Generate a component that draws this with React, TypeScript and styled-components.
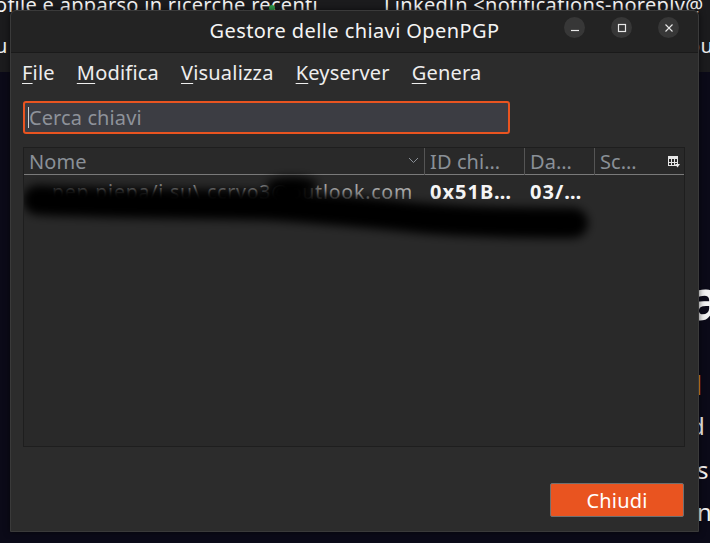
import React from "react";
import styled, { createGlobalStyle } from "styled-components";

const Global = createGlobalStyle`
  html, body { margin: 0; padding: 0; background: #0b0a18; }
  body { font-family: "Noto Sans", "DejaVu Sans", sans-serif; }
  * { box-sizing: border-box; }
`;

const FONT = `"Noto Sans", "DejaVu Sans", sans-serif`;

const Desktop = styled.div`
  position: relative;
  width: 710px;
  height: 543px;
  overflow: hidden;
  background: #0b0a18;
  font-family: ${FONT};
`;

const TopBand = styled.div`
  position: absolute;
  left: 0;
  top: 0;
  width: 710px;
  height: 72px;
  background: #1b1b1d;
`;

const BgText = styled.div<{ $x: number; $y: number; $size?: number; $weight?: number; $color?: string }>`
  position: absolute;
  left: ${(p) => p.$x}px;
  top: ${(p) => p.$y}px;
  font-size: ${(p) => p.$size ?? 20}px;
  font-weight: ${(p) => p.$weight ?? 400};
  color: ${(p) => p.$color ?? "#f2f2f2"};
  white-space: nowrap;
  line-height: 1;
  letter-spacing: 0.3px;
`;

const GreenDot = styled.span`
  position: absolute;
  left: 269px;
  top: 5px;
  width: 6px;
  height: 6px;
  border-radius: 50%;
  background: #2e9b4a;
`;

const Window = styled.div`
  position: absolute;
  left: 10px;
  top: 10px;
  width: 689px;
  height: 522px;
  background: #2c2c2c;
  border: 1px solid #3a3a3a;
  border-radius: 6px 6px 0 0;
  display: flex;
  flex-direction: column;
  color: #f0f0f0;
  box-shadow: 0 0 6px rgba(0, 0, 0, 0.6);
`;

const TitleBar = styled.div`
  height: 42px;
  flex: none;
  background: #232323;
  border-bottom: 1px solid #1a1a1a;
  border-radius: 6px 6px 0 0;
  display: flex;
  align-items: center;
  justify-content: center;
  position: relative;
`;

const Title = styled.div`
  font-size: 20px;
  color: #f4f4f4;
  margin-top: -2px;
  letter-spacing: 0.4px;
`;

const Controls = styled.div`
  position: absolute;
  right: 19px;
  top: 6px;
  display: flex;
  gap: 26px;
`;

const CtrlBtn = styled.div`
  width: 21px;
  height: 21px;
  border-radius: 50%;
  background: #373737;
  display: flex;
  align-items: center;
  justify-content: center;
`;

const MenuBar = styled.div`
  height: 38px;
  flex: none;
  display: flex;
  align-items: center;
  padding-left: 11px;
  gap: 22px;
  padding-top: 1px;
`;

const MenuItem = styled.span`
  font-size: 20px;
  color: #eeeeee;
  letter-spacing: 0.2px;
`;

const Mnemonic = styled.span`
  text-decoration: underline;
  text-underline-offset: 3px;
  text-decoration-thickness: 1px;
`;

const Body = styled.div`
  flex: 1;
  display: flex;
  flex-direction: column;
  padding: 10px 14px 14px 12px;
`;

const SearchBox = styled.div`
  width: 487px;
  height: 33px;
  border: 2px solid #e95420;
  border-radius: 3px;
  background: #3c3d43;
  display: flex;
  align-items: center;
  padding-left: 3px;
`;

const Caret = styled.span`
  width: 1px;
  height: 21px;
  background: #d0d0d0;
`;

const Placeholder = styled.span`
  font-size: 20px;
  color: #8e929a;
  letter-spacing: 0.1px;
`;

const Table = styled.div`
  margin-top: 13px;
  width: 662px;
  height: 300px;
  border: 1px solid #1e1e1e;
  background: #292929;
  position: relative;
  overflow: hidden;
`;

const HeaderRow = styled.div`
  height: 27px;
  display: grid;
  grid-template-columns: 400px 100px 70px 1fr;
  border-bottom: 1px solid #7a7a7a;
`;

const HeaderCell = styled.div<{ $divider?: boolean }>`
  display: flex;
  align-items: center;
  padding-left: 5px;
  font-size: 20px;
  color: #8a9097;
  border-left: ${(p) => (p.$divider ? "1px solid #555" : "none")};
  position: relative;
  white-space: nowrap;
  letter-spacing: 0.1px;
`;

const HeaderIcon = styled.span<{ $right?: number; $top?: number }>`
  position: absolute;
  right: ${(p) => p.$right ?? 5}px;
  top: ${(p) => p.$top ?? 9}px;
  display: flex;
`;

const Row = styled.div`
  height: 32px;
  display: grid;
  grid-template-columns: 400px 100px 70px 1fr;
  align-items: center;
`;

const Cell = styled.div<{ $bold?: boolean; $pad?: number }>`
  padding-left: ${(p) => p.$pad ?? 6}px;
  padding-right: ${(p) => (p.$bold ? 0 : 22)}px;
  font-size: ${(p) => (p.$bold ? 20 : 19.5)}px;
  font-weight: ${(p) => (p.$bold ? 700 : 400)};
  color: ${(p) => (p.$bold ? "#f6f6f6" : "#a8a8a8")};
  white-space: nowrap;
  overflow: hidden;
  letter-spacing: ${(p) => (p.$bold ? "1px" : "0.8px")};
`;

const Scribble = styled.svg`
  position: absolute;
  left: 0;
  top: 0;
  pointer-events: none;
`;

const Footer = styled.div`
  flex: 1;
  display: flex;
  justify-content: flex-end;
  align-items: flex-end;
`;

const CloseButton = styled.button`
  width: 134px;
  height: 34px;
  background: #e95420;
  border: 1px solid #707070;
  border-radius: 2px;
  color: #ffffff;
  font-family: ${FONT};
  font-size: 20px;
  padding: 0;
  letter-spacing: 0.2px;
`;

const Underline = ({ m, rest }: { m: string; rest: string }) => (
  <MenuItem>
    <Mnemonic>{m}</Mnemonic>
    {rest}
  </MenuItem>
);

export default function App() {
  return (
    <>
      <Global />
      <Desktop>
        <TopBand />
        <BgText $x={-5} $y={-5}>ofile è apparso in ricerche recenti</BgText>
        <GreenDot />
        <BgText $x={384} $y={-5}>LinkedIn &lt;notifications-noreply@</BgText>
        <BgText $x={-5} $y={36}>u</BgText>
        <BgText $x={688} $y={36}>ou</BgText>
        <BgText $x={688} $y={270} $size={56} $weight={700}>a</BgText>
        <BgText $x={694} $y={374} $size={19} $color="#e99a2a">|</BgText>
        <BgText $x={690} $y={414} $size={24}>d</BgText>
        <BgText $x={697} $y={458} $size={24}>s</BgText>
        <BgText $x={697} $y={500} $size={24}>n</BgText>

        <Window>
          <TitleBar>
            <Title>Gestore delle chiavi OpenPGP</Title>
            <Controls>
              <CtrlBtn>
                <svg width="10" height="10" viewBox="0 0 10 10">
                  <line x1="1" y1="7.5" x2="9" y2="7.5" stroke="#e8e8e8" strokeWidth="1.2" />
                </svg>
              </CtrlBtn>
              <CtrlBtn>
                <svg width="10" height="10" viewBox="0 0 10 10">
                  <rect x="1.5" y="1.5" width="7" height="7" fill="none" stroke="#e8e8e8" strokeWidth="1.2" />
                </svg>
              </CtrlBtn>
              <CtrlBtn>
                <svg width="10" height="10" viewBox="0 0 10 10">
                  <path d="M1.5 1.5 L8.5 8.5 M8.5 1.5 L1.5 8.5" stroke="#e8e8e8" strokeWidth="1.1" />
                </svg>
              </CtrlBtn>
            </Controls>
          </TitleBar>

          <MenuBar>
            <Underline m="F" rest="ile" />
            <Underline m="M" rest="odifica" />
            <Underline m="V" rest="isualizza" />
            <Underline m="K" rest="eyserver" />
            <Underline m="G" rest="enera" />
          </MenuBar>

          <Body>
            <SearchBox>
              <Caret />
              <Placeholder>Cerca chiavi</Placeholder>
            </SearchBox>

            <Table>
              <HeaderRow>
                <HeaderCell>
                  Nome
                  <HeaderIcon>
                    <svg width="11" height="7" viewBox="0 0 11 7">
                      <path d="M1 1 L5.5 5.5 L10 1" fill="none" stroke="#8a9097" strokeWidth="1" />
                    </svg>
                  </HeaderIcon>
                </HeaderCell>
                <HeaderCell $divider>ID chi…</HeaderCell>
                <HeaderCell $divider>Da…</HeaderCell>
                <HeaderCell $divider>
                  Sc…
                  <HeaderIcon $right={4} $top={8}>
                    <svg width="12" height="12" viewBox="0 0 12 12">
                      <rect x="0.5" y="0.5" width="9" height="9" fill="none" stroke="#e6e6e6" strokeWidth="1" />
                      <rect x="0.5" y="0.5" width="9" height="2.5" fill="#e6e6e6" />
                      <line x1="3.5" y1="3" x2="3.5" y2="10" stroke="#e6e6e6" strokeWidth="1" />
                      <line x1="6.5" y1="3" x2="6.5" y2="10" stroke="#e6e6e6" strokeWidth="1" />
                      <line x1="0.5" y1="6.5" x2="9.5" y2="6.5" stroke="#e6e6e6" strokeWidth="1" />
                      <path d="M7 8 L12 8 L9.5 11.5 Z" fill="#e6e6e6" />
                    </svg>
                  </HeaderIcon>
                </HeaderCell>
              </HeaderRow>
              <Row>
                <Cell $pad={28}>pep piepa/i su\ ccrvo3@outlook.com</Cell>
                <Cell $bold>0x51B…</Cell>
                <Cell $bold>03/…</Cell>
                <Cell />
              </Row>
              <Scribble width="662" height="300" viewBox="0 0 662 300">
                <defs>
                  <filter id="blur" x="-20%" y="-80%" width="140%" height="260%">
                    <feGaussianBlur stdDeviation="5" />
                  </filter>
                </defs>
                <g filter="url(#blur)" fill="none" stroke="#000" strokeLinecap="round">
                  <path d="M14 52 C 70 55, 170 56, 240 57 C 290 60, 337 64, 397 70 C 457 75, 517 75, 549 75" strokeWidth="30" />
                  <ellipse cx="268" cy="37" rx="26" ry="8" fill="#000" stroke="none" />
                </g>
              </Scribble>
            </Table>

            <Footer>
              <CloseButton>Chiudi</CloseButton>
            </Footer>
          </Body>
        </Window>
      </Desktop>
    </>
  );
}
